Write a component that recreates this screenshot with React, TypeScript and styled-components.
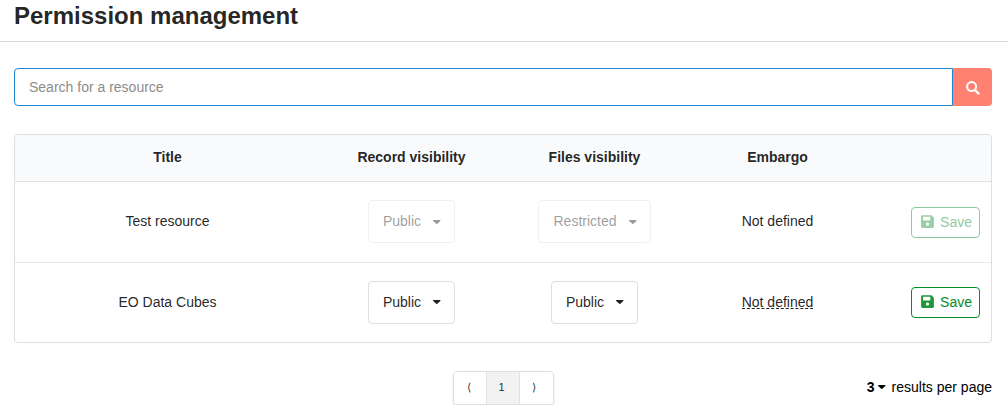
import React, { useState } from "react";
import styled, { createGlobalStyle } from "styled-components";

const GlobalStyle = createGlobalStyle`
  *, *::before, *::after { box-sizing: border-box; }
  body {
    margin: 0;
    background: #fff;
    color: rgba(0, 0, 0, 0.87);
    font: 14px/20px "Liberation Sans", Arial, sans-serif;
  }
  button, input, select { font: inherit; }
`;

const Header = styled.header`
  padding: 0 14px 10px;
  border-bottom: 1px solid #d9dadb;
`;

const Heading = styled.h1`
  margin: 0;
  font-size: 24px;
  line-height: 31px;
  font-weight: 700;
`;

const Content = styled.main`
  display: flex;
  flex-direction: column;
  gap: 28px;
  padding: 26px 16px 0 14px;
`;

const SearchForm = styled.form`
  display: flex;
  height: 38px;
`;

const SearchInput = styled.input`
  flex: 1;
  min-width: 0;
  padding: 0 14px;
  border: 1px solid #2185d0;
  border-radius: 4px 0 0 4px;
  outline: none;
  color: inherit;
  &::placeholder { color: #8c8c8c; opacity: 1; }
`;

const SearchButton = styled.button`
  display: flex;
  align-items: center;
  justify-content: center;
  width: 39px;
  padding: 2px 0 0;
  border: 0;
  border-radius: 0 4px 4px 0;
  background: #fe8172;
  color: #fff;
  cursor: pointer;
`;

const Table = styled.table`
  width: 100%;
  table-layout: fixed;
  border: 1px solid #dededf;
  border-radius: 4px;
  border-spacing: 0;
  text-align: center;
`;

const Column = styled.col<{ $share: number }>`
  width: ${({ $share }) => ($share * 100) / 16}%;
`;

const HeadCell = styled.th`
  height: 47px;
  padding: 0 11px 2px;
  border-bottom: 1px solid #e1e2e3;
  background: #f9fafb;
  &:first-child { border-top-left-radius: 3px; }
  &:last-child { border-top-right-radius: 3px; }
`;

const Cell = styled.td`
  height: 80px;
  padding: 0 11px 2px;
  tr + tr > & { border-top: 1px solid #e9e9e9; }
`;

const SelectCell = styled(Cell)`
  padding-bottom: 1px;
`;

const ActionCell = styled(Cell)`
  padding-bottom: 0;
  text-align: right;
`;

const SelectBox = styled.span<{ $disabled: boolean }>`
  display: inline-grid;
  align-items: center;
  vertical-align: middle;
  opacity: ${({ $disabled }) => ($disabled ? 0.45 : 1)};
  > * { grid-area: 1 / 1; }
`;

const Select = styled.select`
  appearance: none;
  field-sizing: content;
  height: 43px;
  padding: 0 33px 1px 14px;
  border: 1px solid #dededf;
  border-radius: 4px;
  background: #fff;
  color: rgba(0, 0, 0, 0.87);
  opacity: 1;
`;

const SelectCaret = styled.svg`
  justify-self: end;
  margin-right: 14px;
  pointer-events: none;
`;

const EmbargoLink = styled.a`
  display: inline-block;
  color: inherit;
  line-height: 12px;
  text-decoration: none;
  border-bottom: 1px dashed #222;
`;

const SaveButton = styled.button`
  display: inline-flex;
  align-items: center;
  gap: 5px;
  height: 31px;
  padding: 0 7px 1px 9px;
  border: 1px solid #058b25;
  border-radius: 4px;
  background: #fff;
  color: #058b25;
  vertical-align: middle;
  cursor: pointer;
  &:disabled { opacity: 0.45; cursor: default; }
`;

const Footer = styled.footer`
  display: grid;
  grid-template-columns: 1fr auto 1fr;
  align-items: center;
`;

const Pagination = styled.nav`
  grid-column: 2;
  display: flex;
  border: 1px solid #dededf;
  border-radius: 4px;
  box-shadow: 0 1px 2px rgba(34, 36, 38, 0.15);
  overflow: hidden;
`;

const PageLink = styled.a<{ $active?: boolean }>`
  width: 33px;
  padding: 0 4px 2px 0;
  color: inherit;
  background: ${({ $active }) => ($active ? "#f2f2f2" : "#fff")};
  font-size: 11px;
  line-height: 30px;
  text-align: center;
  text-decoration: none;
  &:not(:last-child) { border-right: 1px solid #e0e0e0; padding-right: 2px; }
`;

const PageSize = styled.label`
  justify-self: end;
  display: flex;
  align-items: center;
  gap: 6px;
  padding-bottom: 2px;
  color: #000;
`;

const PageSizeSelect = styled.select`
  appearance: none;
  field-sizing: content;
  padding: 0 11px 0 0;
  border: 0;
  background: transparent;
  color: #000;
  font-weight: 700;
`;

const PageSizeBox = styled.span`
  display: inline-grid;
  align-items: center;
  > * { grid-area: 1 / 1; }
`;

const PageSizeCaret = styled.svg`
  justify-self: end;
  pointer-events: none;
`;

const CaretShape = () => <path d="M0.3 0h6.9q.5.5.1 1L4.3 3.7q-.5.5-1 0L.2 1Q-.2.5.3 0z" fill="currentColor" />;

const SearchIcon = () => (
  <svg width="14" height="14" viewBox="0 0 14 14" fill="none" stroke="currentColor" aria-hidden="true">
    <circle cx="5.6" cy="5.6" r="4.5" strokeWidth="2" />
    <path d="M9.2 9.2l3.4 3.4" strokeWidth="2.3" strokeLinecap="round" />
  </svg>
);

const SaveIcon = () => (
  <svg width="14" height="14" viewBox="0 0 14 14" aria-hidden="true">
    <path
      fill="currentColor"
      opacity="0.9"
      fillRule="evenodd"
      d="M1.4.2H9.8q.6 0 1 .4l1.7 1.9q.4.4.4.9v8.2q0 1.3-1.3 1.3H1.4Q.1 12.900.1 11.600V1.500Q.1.200 1.400.2zM2 2.200v2.800q0 .5.5.5H8.800q.5 0 .5-.5v-2.800q0-.5-.5-.5H2.500q-.5 0-.5.5zM6.500 7.400a1.700 1.700 0 1 0 0 3.400a1.700 1.700 0 1 0 0-3.400z"
    />
  </svg>
);

type Visibility = "Public" | "Restricted";

interface Resource {
  title: string;
  record: Visibility;
  files: Visibility;
  embargo: string;
  locked: boolean;
}

const resources: Resource[] = [
  { title: "Test resource", record: "Public", files: "Restricted", embargo: "Not defined", locked: true },
  { title: "EO Data Cubes", record: "Public", files: "Public", embargo: "Not defined", locked: false },
];

function VisibilitySelect({ label, initial, disabled }: { label: string; initial: Visibility; disabled: boolean }) {
  const [value, setValue] = useState<string>(initial);
  return (
    <SelectBox $disabled={disabled}>
      <Select aria-label={label} value={value} disabled={disabled} onChange={(e) => setValue(e.target.value)}>
        <option>Public</option>
        <option>Restricted</option>
      </Select>
      <SelectCaret width="8" height="4" viewBox="0 0 8 4" aria-hidden="true">
        <CaretShape />
      </SelectCaret>
    </SelectBox>
  );
}

export default function App() {
  return (
    <>
      <GlobalStyle />
      <Header>
        <Heading>Permission management</Heading>
      </Header>
      <Content>
        <SearchForm role="search" onSubmit={(e) => e.preventDefault()}>
          <SearchInput type="text" placeholder="Search for a resource" aria-label="Search for a resource" />
          <SearchButton type="submit" aria-label="Search">
            <SearchIcon />
          </SearchButton>
        </SearchForm>
        <Table>
          <colgroup>
            <Column $share={5} />
            <Column $share={3} />
            <Column $share={3} />
            <Column $share={3} />
            <Column $share={2} />
          </colgroup>
          <thead>
            <tr>
              <HeadCell>Title</HeadCell>
              <HeadCell>Record visibility</HeadCell>
              <HeadCell>Files visibility</HeadCell>
              <HeadCell>Embargo</HeadCell>
              <HeadCell />
            </tr>
          </thead>
          <tbody>
            {resources.map((r) => (
              <tr key={r.title}>
                <Cell>{r.title}</Cell>
                <SelectCell>
                  <VisibilitySelect label={`Record visibility of ${r.title}`} initial={r.record} disabled={r.locked} />
                </SelectCell>
                <SelectCell>
                  <VisibilitySelect label={`Files visibility of ${r.title}`} initial={r.files} disabled={r.locked} />
                </SelectCell>
                <Cell>{r.locked ? r.embargo : <EmbargoLink href="#embargo">{r.embargo}</EmbargoLink>}</Cell>
                <ActionCell>
                  <SaveButton type="button" disabled={r.locked}>
                    <SaveIcon />
                    Save
                  </SaveButton>
                </ActionCell>
              </tr>
            ))}
          </tbody>
        </Table>
        <Footer>
          <Pagination aria-label="Pagination">
            <PageLink href="#previous" aria-label="Previous page">⟨</PageLink>
            <PageLink href="#1" $active aria-current="page">1</PageLink>
            <PageLink href="#next" aria-label="Next page">⟩</PageLink>
          </Pagination>
          <PageSize>
            <PageSizeBox>
              <PageSizeSelect aria-label="Results per page" defaultValue="3">
                <option>3</option>
                <option>5</option>
              </PageSizeSelect>
              <PageSizeCaret width="8" height="4" viewBox="0 0 8 4" aria-hidden="true">
                <CaretShape />
              </PageSizeCaret>
            </PageSizeBox>
            results per page
          </PageSize>
        </Footer>
      </Content>
    </>
  );
}
